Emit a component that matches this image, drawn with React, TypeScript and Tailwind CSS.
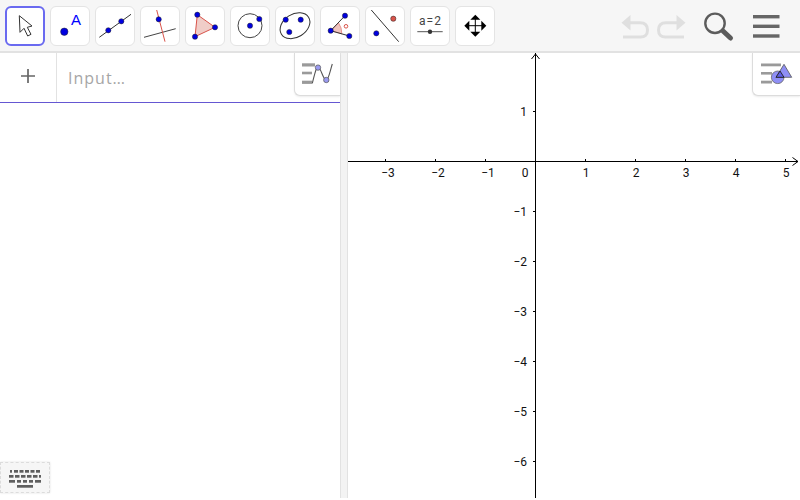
import React from 'react';

const BLUE = '#0000e0';
const RED = '#d9534a';

const Pt = ({ x, y, r = 2.6, fill = BLUE }: { x: number; y: number; r?: number; fill?: string }) => (
  <circle cx={x} cy={y} r={r} fill={fill} stroke="#222" strokeWidth="0.5" />
);

// icons are drawn in the 40x40 box of the tool button
const toolIcons: React.ReactNode[] = [
  <path d="M14.3 9.7 15 26.3 19 22.3 22.7 30 26 28.3 22.3 21.3 27 20Z" fill="#fff" stroke="#333" strokeWidth="1" strokeLinejoin="round" />,
  <>
    <circle cx="14.3" cy="25.7" r="3.7" fill={BLUE} stroke="#222" strokeWidth="0.5" />
    <text x="26" y="19.3" textAnchor="middle" fontSize="15" fill="#0000ff" fontFamily="Liberation Sans, sans-serif">A</text>
  </>,
  <>
    <line x1="4.3" y1="31.3" x2="36" y2="8.3" stroke="#333" strokeWidth="1" />
    <Pt x={13.3} y={24.3} />
    <Pt x={26.3} y={15.3} />
  </>,
  <>
    <line x1="4" y1="31.3" x2="35.7" y2="22.7" stroke="#444" strokeWidth="1" />
    <line x1="16.7" y1="4" x2="25" y2="35.7" stroke={RED} strokeWidth="1" />
    <Pt x={18.7} y={13.3} />
  </>,
  <>
    <polygon points="12.3,8.7 30,21.3 10,30.7" fill="#f0cdc8" stroke={RED} strokeWidth="1" />
    <Pt x={12.3} y={8.7} />
    <Pt x={30} y={21.3} />
    <Pt x={10} y={30.7} />
  </>,
  <>
    <circle cx="20" cy="19.7" r="12" fill="none" stroke="#444" strokeWidth="1" />
    <Pt x={20} y={19.7} />
    <Pt x={29.3} y={13} />
  </>,
  <>
    <ellipse cx="20" cy="19.7" rx="16" ry="11.5" transform="rotate(-32 20 19.7)" fill="none" stroke="#333" strokeWidth="1" />
    <Pt x={10.7} y={13.7} />
    <Pt x={25.7} y={13.7} />
    <Pt x={14.3} y={26} />
  </>,
  <>
    <path d="M10.7 24.7 18.6 17 Q22 21.5 21.8 27.8Z" fill="#f0c4be" stroke={RED} strokeWidth="0.5" />
    <line x1="10.7" y1="24.7" x2="25" y2="9.7" stroke="#333" strokeWidth="1" />
    <line x1="10.7" y1="24.7" x2="29.3" y2="30" stroke="#333" strokeWidth="1" />
    <circle cx="26" cy="20.3" r="1.8" fill="none" stroke={RED} strokeWidth="1" />
    <Pt x={10.7} y={24.7} />
    <Pt x={25} y={9.7} />
    <Pt x={29.3} y={30} />
  </>,
  <>
    <line x1="6.3" y1="4" x2="33.7" y2="35.7" stroke="#333" strokeWidth="1" />
    <Pt x={11.3} y={27.3} />
    <Pt x={28.3} y={12.7} fill={RED} />
  </>,
  <>
    <text x="20" y="19" textAnchor="middle" fontSize="12" wordSpacing="-1.8" fill="#444" fontFamily="Roboto, sans-serif">a = 2</text>
    <line x1="7.3" y1="25.7" x2="32.7" y2="25.7" stroke="#555" strokeWidth="1" />
    <circle cx="20" cy="25.7" r="2.2" fill="#333" />
  </>,
  <g transform="translate(20.3 19.7)" fill="#000">
    <line x1="-8" y1="0" x2="8" y2="0" stroke="#000" strokeWidth="1" />
    <line x1="0" y1="-8" x2="0" y2="8" stroke="#000" strokeWidth="1" />
    <polygon points="0,-11 -5,-6 5,-6" />
    <polygon points="0,11 -5,6 5,6" />
    <polygon points="-11,0 -6,-5 -6,5" />
    <polygon points="11,0 6,-5 6,5" />
  </g>,
];

const Toolbar = () => (
  <header className="flex items-start justify-between h-[53px] shrink-0 bg-[#f6f6f6] border-b-2 border-[#e2e2e2]">
    <div className="flex gap-[5px] pl-[5px] pt-[6px]">
      {toolIcons.map((icon, i) => (
        <div
          key={i}
          className={
            i === 0
              ? 'w-10 h-10 bg-white rounded-[6px] border-2 border-[#6a6af0]'
              : 'w-10 h-10 bg-white rounded-[6px] border border-[#e4e4e4]'
          }
        >
          <svg
            viewBox="0 0 40 40"
            className={i === 0 ? 'w-10 h-10 block -m-0.5' : 'w-10 h-10 block -m-px'}
          >
            {icon}
          </svg>
        </div>
      ))}
    </div>
    <svg width="180" height="51" viewBox="620 0 180 51" className="block shrink-0">
      <g fill="none" stroke="#dfdfdf" strokeWidth="3">
        <path d="M629 22.7H640Q647.5 22.7 647.5 30T640 37H623" />
        <path d="M677 22.7H666Q658.5 22.7 658.5 30T666 37H684" />
      </g>
      <polygon points="621.5,22.7 630.5,15 630.5,30.5" fill="#dfdfdf" />
      <polygon points="685.5,22.7 676.5,15 676.5,30.5" fill="#dfdfdf" />
      <circle cx="715" cy="23.3" r="9.7" fill="none" stroke="#5c5c5c" strokeWidth="2.4" />
      <line x1="723" y1="31" x2="730.5" y2="38" stroke="#5c5c5c" strokeWidth="5" strokeLinecap="round" />
      <g fill="#666">
        <rect x="753" y="15" width="26.5" height="3.4" />
        <rect x="753" y="24.6" width="26.5" height="3.4" />
        <rect x="753" y="34.3" width="26.5" height="3.4" />
      </g>
    </svg>
  </header>
);

const StyleBarToggle = ({ children, wide }: { children: React.ReactNode; wide?: boolean }) => (
  <div
    className={
      wide
        ? 'absolute top-0 right-0 h-[43px] w-[48px] bg-white border-b border-l border-[#dcdcdc] rounded-bl-[6px] shadow-[0_1px_2px_rgba(0,0,0,0.08)]'
        : 'absolute top-0 right-0 h-[43px] w-[46px] bg-white border-b border-l border-[#dcdcdc] rounded-bl-[6px] shadow-[0_1px_2px_rgba(0,0,0,0.08)]'
    }
  >
    {children}
  </div>
);

const AlgebraPanel = () => (
  <aside className="relative w-[340px] shrink-0 bg-white">
    <div className="flex h-[50px] border-b border-[#6557d2]">
      <div className="flex items-center justify-center w-[57px] border-r border-[#e2e2e2]">
        <svg width="16" height="16" viewBox="0 0 16 16" className="block -mt-1">
          <path d="M8 1V15M1 8H15" stroke="#666" strokeWidth="1.7" />
        </svg>
      </div>
      <div className="pl-[11px] pt-[15px] text-[16px] leading-5 tracking-[1px] text-[#a6a6a6] font-['Open_Sans',sans-serif]">
        Input…
      </div>
    </div>
    <StyleBarToggle>
      <svg width="45" height="42" viewBox="0 0 45 42" className="block">
        <g fill="#9a9a9a">
          <rect x="7" y="10.3" width="13" height="3.2" />
          <rect x="7" y="18.7" width="10" height="2.6" />
          <rect x="7" y="27.7" width="10" height="3.2" />
        </g>
        <path d="M17.3 30.3C20 20 21 14.3 23 14.3C26 14.3 28 27 31.3 27C33.5 27 35 18 37.3 11" fill="none" stroke="#555" strokeWidth="1.1" />
        <circle cx="23" cy="14.6" r="2.7" fill="#9a9af0" stroke="#555" strokeWidth="0.7" />
        <circle cx="31.3" cy="27" r="2.7" fill="#9a9af0" stroke="#555" strokeWidth="0.7" />
      </svg>
    </StyleBarToggle>
    <div className="absolute left-0 bottom-[5px] flex items-center justify-center w-[50px] h-[31px] bg-[#f6f6f6] border border-dashed border-[#dcdcdc] shadow-[0_0_2px_rgba(0,0,0,0.12)]">
      <svg width="32" height="18" viewBox="0 0 32 18" className="block mt-[3px]" fill="#5f5f5f">
        <rect x="1" y="0" width="2" height="2.7" />
        <rect x="5" y="0" width="4" height="2.7" />
        <rect x="10.5" y="0" width="4" height="2.7" />
        <rect x="16" y="0" width="4" height="2.7" />
        <rect x="21.5" y="0" width="4" height="2.7" />
        <rect x="27" y="0" width="4" height="2.7" />
        <rect x="0" y="5" width="4.5" height="2.7" />
        <rect x="6" y="5" width="4.5" height="2.7" />
        <rect x="12" y="5" width="4.5" height="2.7" />
        <rect x="18" y="5" width="4.5" height="2.7" />
        <rect x="24" y="5" width="4.5" height="2.7" />
        <rect x="30" y="5" width="2" height="2.7" />
        <rect x="0" y="10" width="6" height="2.7" />
        <rect x="8" y="10" width="4" height="2.7" />
        <rect x="14" y="10" width="4" height="2.7" />
        <rect x="20" y="10" width="4" height="2.7" />
        <rect x="26" y="10" width="6" height="2.7" />
        <rect x="8" y="15" width="16" height="2.7" />
      </svg>
    </div>
  </aside>
);

const xTicks = [-3, -2, -1, 1, 2, 3, 4, 5];
const yTicks = [1, -1, -2, -3, -4, -5, -6];
const fmt = (n: number) => (n < 0 ? `\u2212${-n}` : `${n}`);

// origin of the graph, measured inside the 452x445 panel
const OX = 187;
const OY = 108;

const GraphicsPanel = () => (
  <section className="relative flex-1 bg-white">
    <svg width="452" height="445" className="block" fontFamily="Roboto, sans-serif" fontSize="12" fill="#111">
      <g stroke="#000" strokeWidth="1" fill="none">
        <line x1="0" y1={OY + 0.5} x2="450" y2={OY + 0.5} />
        <line x1={OX + 0.5} y1="0" x2={OX + 0.5} y2="445" />
        <path d={`M444.5 ${OY - 3.5}L450 ${OY + 0.5}L444.5 ${OY + 4.5}`} />
        <path d={`M${OX - 3.5} 6L${OX + 0.5} 1L${OX + 4.5} 6`} />
        {xTicks.map((t) => (
          <line key={t} x1={OX + 0.5 + t * 50} y1={OY - 2} x2={OX + 0.5 + t * 50} y2={OY + 1} />
        ))}
        {yTicks.map((t) => (
          <line key={t} x1={OX - 2} y1={OY + 0.5 - t * 50} x2={OX + 1} y2={OY + 0.5 - t * 50} />
        ))}
      </g>
      {xTicks.map((t) => (
        <text key={t} x={OX + t * 50 + (t < 0 ? 3 : 1)} y={OY + 16} textAnchor="middle">{fmt(t)}</text>
      ))}
      <text x={OX - 10} y={OY + 16} textAnchor="middle">0</text>
      {yTicks.map((t) => (
        <text key={t} x={OX - 8} y={OY + 5 - t * 50} textAnchor="end">{fmt(t)}</text>
      ))}
    </svg>
    <StyleBarToggle wide>
      <svg width="47" height="42" viewBox="-1 0 47 42" className="block">
        <g fill="#9a9a9a">
          <rect x="7" y="10.5" width="20" height="2.8" />
          <rect x="7" y="19" width="11" height="2.6" />
          <rect x="7" y="27.7" width="11" height="2.8" />
        </g>
        <circle cx="23.7" cy="24.3" r="6.3" fill="#8f8ff5" stroke="#666" strokeWidth="0.8" />
        <polygon points="30,11.3 22,24.3 37.7,24.3" fill="#8f8ff5" stroke="#555" strokeWidth="0.8" />
        <path d="M26 18 30 24.3H22Z" fill="#5f5fe8" stroke="#222" strokeWidth="0.9" />
      </svg>
    </StyleBarToggle>
  </section>
);

export default function App() {
  return (
    <main className="flex flex-col w-[800px] h-[498px] overflow-hidden bg-white">
      <Toolbar />
      <div className="flex flex-1 min-h-0">
        <AlgebraPanel />
        <div className="w-2 shrink-0 bg-[#f3f3f3] border-x border-[#e2e2e2]" />
        <GraphicsPanel />
      </div>
    </main>
  );
}
